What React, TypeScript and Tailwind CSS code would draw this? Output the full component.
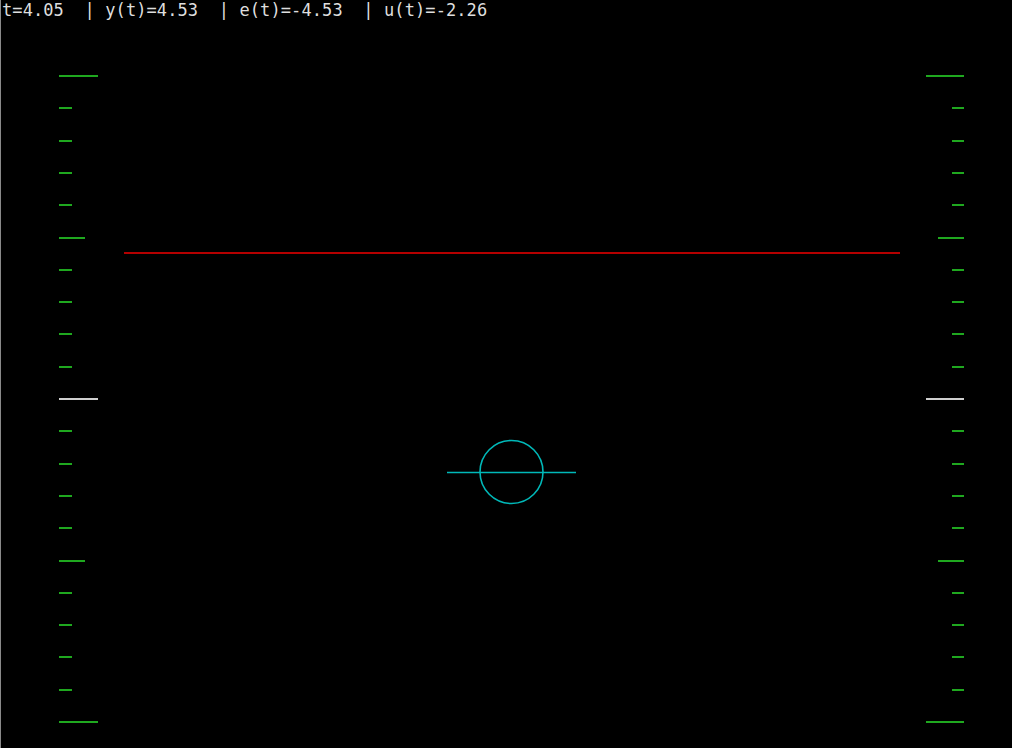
const ticks = Array.from({ length: 21 }, (_, i) => i);

function kind(i: number) {
    if (i === 0 || i === 20) return "long";
    if (i === 10) return "zero";
    if (i === 5 || i === 15) return "mid";
    return "short";
}

export default function App() {
    return (
        <div className="w-[1012px] h-[748px] bg-black border-l border-[#8a8a8a] flex flex-col overflow-hidden">
            <div
                className="h-5 pl-[1px] text-[17px] tracking-[0.09px] leading-5 text-[#dedede] whitespace-pre"
                style={{ fontFamily: '"DejaVu Sans Mono", "Liberation Mono", monospace' }}
            >
                t=4.05  | y(t)=4.53  | e(t)=-4.53  | u(t)=-2.26
            </div>
            <svg width="1011" height="728" viewBox="1 20 1011 728" className="block">
                {ticks.map((i) => {
                    const y = Math.round(76 + i * 32.3);
                    const k = kind(i);
                    const color = k === "zero" ? "#cfcfcf" : "#1fa81f";
                    const lx2 = k === "long" || k === "zero" ? 98 : k === "mid" ? 85 : 72;
                    const rx1 = k === "long" || k === "zero" ? 926 : k === "mid" ? 938 : 952;
                    return (
                        <g key={i}>
                            <line x1="59" y1={y} x2={lx2} y2={y} stroke={color} strokeWidth="2" />
                            <line x1={rx1} y1={y} x2="964" y2={y} stroke={color} strokeWidth="2" />
                        </g>
                    );
                })}
                <line x1="124" y1="253" x2="900" y2="253" stroke="#b40000" strokeWidth="2" />
                <line x1="447" y1="472.5" x2="576" y2="472.5" stroke="#00b8b8" strokeWidth="1.6" />
                <circle cx="511.5" cy="472" r="31.5" fill="none" stroke="#00b8b8" strokeWidth="1.6" />
            </svg>
        </div>
    );
}
